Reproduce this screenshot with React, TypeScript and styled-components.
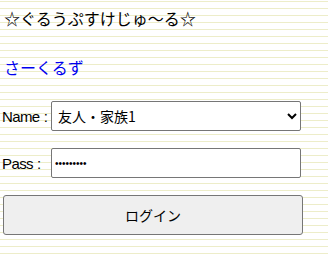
import React from 'react';
import styled, { createGlobalStyle } from 'styled-components';

const Global = createGlobalStyle`
    html, body {
        margin: 0;
        padding: 0;
    }
    body {
        min-height: 254px;
        background-color: #ffffff;
        background-image: repeating-linear-gradient(
            to bottom,
            #ededc9 0px,
            #ededc9 1px,
            #ffffff 1px,
            #ffffff 7px
        );
        background-position: 0 1px;
        font-family: "Noto Sans CJK JP", "Liberation Sans", sans-serif;
        color: #000;
    }
`;

const Wrap = styled.div`
    display: flex;
    flex-direction: column;
    padding: 6px 4px 0 4px;
`;

const Title = styled.div`
    font-size: 16px;
    line-height: 24px;
`;

const CircleLink = styled.a`
    margin-top: 25px;
    font-size: 16px;
    line-height: 24px;
    color: #0000ee;
    text-decoration: none;
`;

const Form = styled.form`
    display: flex;
    flex-direction: column;
    margin-top: 22px;
    margin-left: -2px;
    gap: 17px;
`;

const Row = styled.div`
    display: flex;
    align-items: center;
`;

const Label = styled.label`
    display: flex;
    width: 49px;
    flex-shrink: 0;
    white-space: nowrap;
    font-family: "Liberation Sans", sans-serif;
    font-size: 15px;
    letter-spacing: -0.6px;
`;

const Colon = styled.span`
    margin-left: 4px;
`;

const Select = styled.select`
    width: 250px;
    height: 30px;
    box-sizing: border-box;
    border: 1px solid #767676;
    border-radius: 2px;
    background: #fff;
    font-family: "Noto Sans CJK JP", sans-serif;
    font-size: 14px;
    padding: 0 2px;
    color: #000;
`;

const Input = styled.input`
    width: 250px;
    height: 30px;
    box-sizing: border-box;
    border: 1px solid #767676;
    border-radius: 2px;
    background: #fff;
    font-size: 10px;
    padding: 0 3px;
`;

const Button = styled.button`
    width: 300px;
    height: 40px;
    margin-left: 1px;
    box-sizing: border-box;
    border: 1px solid #767676;
    border-radius: 3px;
    background: #efefef;
    font-family: "Noto Sans CJK JP", sans-serif;
    font-size: 14px;
    color: #000;
`;

export default function App() {
    return (
        <>
            <Global />
            <Wrap>
                <Title>☆ぐるうぷすけじゅ～る☆</Title>
                <CircleLink href="#">さーくるず</CircleLink>
                <Form onSubmit={(e) => e.preventDefault()}>
                    <Row>
                        <Label>Name<Colon>:</Colon></Label>
                        <Select defaultValue="1">
                            <option value="1">友人・家族1</option>
                        </Select>
                    </Row>
                    <Row>
                        <Label>Pass<Colon>:</Colon></Label>
                        <Input type="password" defaultValue="aaaaaaaaa" />
                    </Row>
                    <Button type="submit">ログイン</Button>
                </Form>
            </Wrap>
        </>
    );
}
